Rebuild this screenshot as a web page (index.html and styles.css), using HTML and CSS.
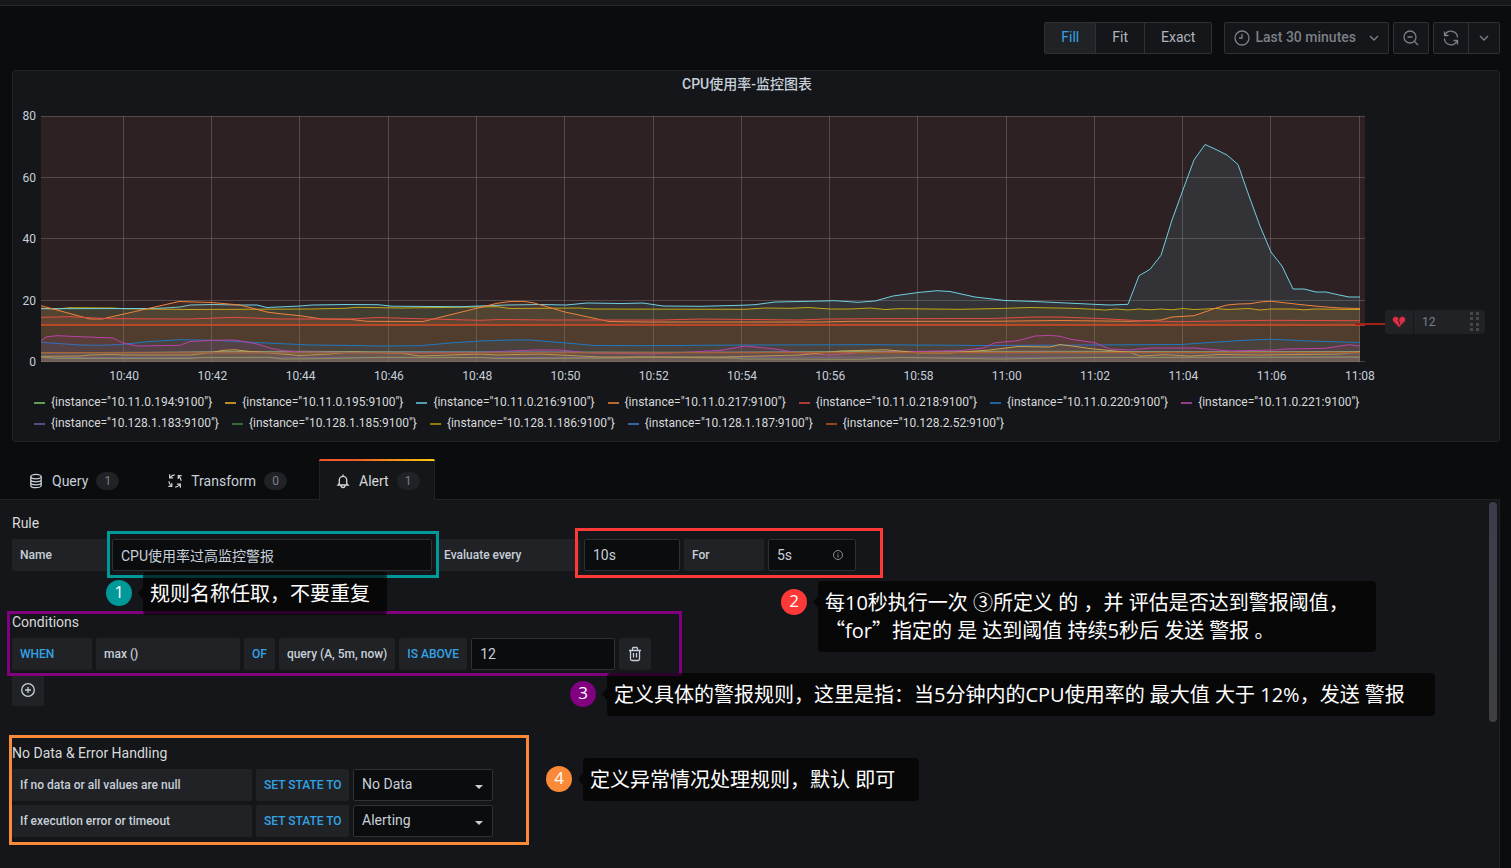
FILE: index.html
```html
<!DOCTYPE html>
<html lang="zh-CN">
<head>
<meta charset="utf-8">
<title>CPU使用率-监控图表</title>
<link rel="stylesheet" href="styles.css">
</head>
<body>
<div class="topstrip"></div>
<header class="toolbar">
  <div class="btn-group sizes">
    <button class="btn active">Fill</button><button class="btn">Fit</button><button class="btn">Exact</button>
  </div>
  <div class="btn-group">
    <button class="btn time">
      <svg class="icon" viewBox="0 0 16 16"><circle cx="8" cy="8" r="7"/><path d="M8 4v4H5"/></svg>
      <span>Last 30 minutes</span>
      <svg class="chev" viewBox="0 0 10 6"><path d="M1 1l4 4 4-4"/></svg>
    </button>
  </div>
  <div class="btn-group">
    <button class="btn square" aria-label="Zoom out"><svg class="icon" viewBox="0 0 16 16"><circle cx="7" cy="7" r="6"/><path d="M4.500 7h5M11.500 11.500l3.500 3.500"/></svg></button>
  </div>
  <div class="btn-group">
    <button class="btn square" aria-label="Refresh"><svg class="icon" viewBox="0 0 16 16"><path d="M1.500 1.500v4h4M2 5.200A6.500 6.500 0 0 1 14.500 7.500M14.500 14.500v-4h-4M14 10.800A6.500 6.500 0 0 1 1.500 8.500"/></svg></button><button class="btn narrow" aria-label="Refresh interval"><svg class="chev" viewBox="0 0 10 6"><path d="M1 1l4 4 4-4"/></svg></button>
  </div>
</header>

<section class="panel">
  <h2 class="panel-title">CPU使用率-监控图表</h2>
  <div class="chart">
    <div class="y-axis"><span>80</span><span>60</span><span>40</span><span>20</span><span>0</span></div>
    <div class="plot">
      <svg id="plot" viewBox="41 116 1324 246" preserveAspectRatio="none"></svg>
      <div class="x-axis"><span>10:40</span><span>10:42</span><span>10:44</span><span>10:46</span><span>10:48</span><span>10:50</span><span>10:52</span><span>10:54</span><span>10:56</span><span>10:58</span><span>11:00</span><span>11:02</span><span>11:04</span><span>11:06</span><span>11:08</span></div>
    </div>
    <div class="threshold">
      <i class="threshold-line"></i>
      <div class="handle">
        <span class="heart"><svg viewBox="0 0 14 14"><path class="halo" d="M7 13.400L0.900 7.300A3.600 3.600 0 0 1 0.900 2.200A3.600 3.600 0 0 1 6 1.800L7 2.800L8 1.800A3.600 3.600 0 0 1 13.100 2.200A3.600 3.600 0 0 1 13.100 7.300Z"/><path class="fill" d="M7 12L1.800 6.800A2.700 2.700 0 0 1 5.700 2.700L7 4L8.300 2.700A2.700 2.700 0 0 1 12.200 6.800Z"/><path class="crack" d="M7.300 3.500L6 6l2 1-1 2.500"/></svg></span>
        <span class="value">12</span>
        <svg class="grip" viewBox="0 0 9 20"><path d="M0 0h3v3H0zM6 0h3v3H6zM0 5h3v3H0zM6 5h3v3H6zM0 11h3v3H0zM6 11h3v3H6zM0 16h3v3H0zM6 16h3v3H6z"/></svg>
      </div>
    </div>
  </div>
  <ul class="legend">
    <li><i class="key c194"></i>{instance="10.11.0.194:9100"}</li>
    <li><i class="key c195"></i>{instance="10.11.0.195:9100"}</li>
    <li><i class="key c216"></i>{instance="10.11.0.216:9100"}</li>
    <li><i class="key c217"></i>{instance="10.11.0.217:9100"}</li>
    <li><i class="key c218"></i>{instance="10.11.0.218:9100"}</li>
    <li><i class="key c220"></i>{instance="10.11.0.220:9100"}</li>
    <li><i class="key c221"></i>{instance="10.11.0.221:9100"}</li>
    <li><i class="key c183"></i>{instance="10.128.1.183:9100"}</li>
    <li><i class="key c185"></i>{instance="10.128.1.185:9100"}</li>
    <li><i class="key c186"></i>{instance="10.128.1.186:9100"}</li>
    <li><i class="key c187"></i>{instance="10.128.1.187:9100"}</li>
    <li><i class="key c52"></i>{instance="10.128.2.52:9100"}</li>
  </ul>
</section>

<nav class="tabs">
  <button class="tab"><svg class="icon" viewBox="0 0 16 16"><ellipse cx="8" cy="3.600" rx="5.200" ry="2.200"/><path d="M2.800 3.600v8.800c0 1.200 2.300 2.200 5.200 2.200s5.200-1 5.200-2.200V3.600M2.800 6.600c0 1.200 2.300 2.200 5.200 2.200s5.200-1 5.200-2.200M2.800 9.600c0 1.200 2.300 2.200 5.200 2.200s5.200-1 5.200-2.200"/></svg>Query<span class="count">1</span></button>
  <button class="tab"><svg class="icon process" viewBox="0 0 16 16"><g id="arm"><path d="M2.600 1.300v3.500h3.500M3 4.500C4.200 3 5.800 2 7.800 1.900"/></g><use href="#arm" transform="rotate(90 8 8)"/><use href="#arm" transform="rotate(180 8 8)"/><use href="#arm" transform="rotate(270 8 8)"/></svg>Transform<span class="count">0</span></button>
  <button class="tab current"><svg class="icon" viewBox="0 0 16 16"><path d="M8 1.500v1.500M4.300 10.500V7a3.700 3.700 0 0 1 7.400 0v3.500l1.300 1.500H3zM6 12.500a2 2 0 0 0 4 0"/></svg>Alert<span class="count">1</span></button>
</nav>

<main class="editor">
  <section class="group">
    <h3>Rule</h3>
    <div class="row">
      <label class="tag w-96" for="name">Name</label>
      <input class="field w-320" id="name" type="text" value="CPU使用率过高监控警报">
      <label class="tag w-144" for="every">Evaluate every</label>
      <input class="field w-96" id="every" type="text" value="10s">
      <label class="tag w-80" for="for">For</label>
      <span class="wrap">
        <input class="field w-88" id="for" type="text" value="5s">
        <svg class="info" viewBox="0 0 12 12"><circle cx="6" cy="6" r="4.500"/><path d="M6 5.500v3M6 3.500v1"/></svg>
      </span>
    </div>
  </section>

  <section class="group conditions">
    <h3>Conditions</h3>
    <div class="row">
      <span class="tag key-word w-80">WHEN</span>
      <button class="tag w-144">max ()</button>
      <span class="tag key-word">OF</span>
      <button class="tag">query (A, 5m, now)</button>
      <button class="tag key-word">IS ABOVE</button>
      <input class="field w-144" type="text" value="12" aria-label="Threshold">
      <button class="tag w-32" aria-label="Delete"><svg class="icon" viewBox="0 0 16 16"><path d="M2 4.500h12M5.500 4.200V2.500a1 1 0 0 1 1-1h3a1 1 0 0 1 1 1v1.700M3.500 4.500V13a1.500 1.500 0 0 0 1.500 1.500h6a1.500 1.500 0 0 0 1.500-1.500V4.500M6.500 7v4.500M9.500 7v4.500"/></svg></button>
    </div>
    <div class="row">
      <button class="tag w-32" aria-label="Add condition"><svg class="icon" viewBox="0 0 16 16"><circle cx="8" cy="8" r="6.300"/><path d="M8 5v6M5 8h6"/></svg></button>
    </div>
  </section>

  <section class="group errors">
    <h3>No Data &amp; Error Handling</h3>
    <div class="row">
      <label class="tag w-240" for="nodata">If no data or all values are null</label>
      <span class="tag key-word w-93">SET STATE TO</span>
      <span class="wrap"><select class="field w-140" id="nodata"><option>No Data</option></select><i class="caret"></i></span>
    </div>
    <div class="row">
      <label class="tag w-240" for="execerr">If execution error or timeout</label>
      <span class="tag key-word w-93">SET STATE TO</span>
      <span class="wrap"><select class="field w-140" id="execerr"><option>Alerting</option></select><i class="caret"></i></span>
    </div>
  </section>

  <i class="scrollbar"></i>

  <i class="frame frame-1"></i>
  <i class="frame frame-2"></i>
  <i class="frame frame-3"></i>
  <i class="frame frame-4"></i>
  <div class="note note-1"><b class="badge">1</b><p>规则名称任取，不要重复</p></div>
  <div class="note note-2"><b class="badge">2</b><p>每10秒执行一次 ③所定义 的 ，并 评估是否达到警报阈值，<br><span class="cjk">“</span>for<span class="cjk">”</span>指定的 是 达到阈值 持续5秒后 发送 警报 。</p></div>
  <div class="note note-3"><b class="badge">3</b><p>定义具体的警报规则，这里是指：当5分钟内的CPU使用率的 最大值 大于 12%，发送 警报</p></div>
  <div class="note note-4"><b class="badge">4</b><p>定义异常情况处理规则，默认 即可</p></div>
</main>
<script src="chart.js"></script>
</body>
</html>
```
FILE: styles.css
```css
* { box-sizing: border-box; }
body {
  margin: 0;
  min-height: 100vh;
  display: flex;
  flex-direction: column;
  background: #0b0c0e;
  color: #c7d0d9;
  font: 14px/20px Roboto, "Noto Sans CJK SC", sans-serif;
  overflow: hidden;
}
button, input, select { font: inherit; color: inherit; margin: 0; }
h2, h3, p, ul { margin: 0; padding: 0; }
svg { display: block; fill: none; stroke: currentColor; flex: none; }
.icon { width: 16px; height: 16px; stroke-width: 1.3; }
.process { stroke-width: 1.2; }
.chev { width: 10px; height: 6px; stroke-width: 1.4; }

.topstrip { height: 6px; background: #17181c; border-bottom: 1px solid #26282c; }
.toolbar {
  display: flex;
  justify-content: flex-end;
  gap: 4px;
  padding: 16px 11px 16px 12px;
}
.btn-group { display: flex; height: 32px; border: 1px solid #2c3235; border-radius: 2px; background: #141619; }
.sizes { margin-right: 8px; }
.btn {
  display: flex;
  align-items: center;
  justify-content: center;
  padding: 0 16px;
  border: 0;
  background: none;
  color: #7b8087;
}
.btn + .btn { border-left: 1px solid #2c3235; }
.sizes .btn { color: #aeb5be; padding-bottom: 2px; }
.sizes .active { background: #202226; color: #33a2e5; }
.time { padding: 0 9px; font-weight: 500; }
.time span { margin: 0 13px 2px 5px; }
.square { width: 34px; padding: 0; }
.narrow { width: 31px; padding: 0; }

.panel {
  margin: 0 11px 0 12px;
  border: 1px solid #202226;
  border-radius: 3px;
  background: #141619;
  padding-bottom: 7px;
}
.panel-title {
  padding: 3px 18px 0 0;
  font-size: 14px;
  line-height: 20px;
  font-weight: 500;
  text-align: center;
}
.chart { display: grid; grid-template-columns: 28px 1fr 134px; padding-top: 22px; font-size: 12px; line-height: 16px; }
.y-axis {
  display: flex;
  flex-direction: column;
  justify-content: space-between;
  height: 262px;
  margin-top: -8px;
  padding-right: 5px;
  text-align: right;
}
.plot svg { width: 100%; height: 246px; stroke-width: 1; }
.grid-line { stroke: rgba(222, 222, 222, 0.22); }
.region { fill: rgba(234, 112, 112, 0.12); stroke: none; }
.limit { stroke: rgba(215, 75, 36, 0.75); stroke-width: 2; }
.area { stroke: none; fill-opacity: 0.1; }
.line { fill: none; }
.x-axis { display: grid; grid-template-columns: repeat(15, 1fr); margin: 6px -39px 0 39px; text-align: center; }
.threshold { display: flex; align-items: center; height: 24px; margin: 194px 14px 0 -10px; }
.threshold-line { width: 30px; height: 2px; margin-top: 4px; background: #a02015; }
.handle { display: flex; align-items: center; width: 100px; height: 24px; border-radius: 4px; background: #202226; color: #8e8e8e; }
.heart { display: flex; align-items: center; justify-content: center; width: 29px; height: 24px; border-right: 1px solid #141619; }
.heart svg { width: 14px; height: 14px; }
.halo { stroke: #8c1c30; stroke-width: 0.8; stroke-dasharray: 1 1; }
.heart .fill { fill: #e02f44; stroke: none; }
.crack { stroke: #202226; stroke-width: 1; }
.value { flex: 1; padding-left: 8px; color: #7b8087; }
.grip { width: 9px; height: 20px; margin-right: 6px; fill: #46474b; stroke: none; }

.legend {
  display: flex;
  flex-wrap: wrap;
  column-gap: 13px;
  margin-top: 8px;
  padding: 0 21px;
  list-style: none;
  font-size: 12px;
  line-height: 21px;
  color: #d8d9da;
}
.legend li { display: flex; align-items: center; white-space: nowrap; }
.key { width: 11px; height: 2px; margin: 1px 6px 0 0; }
.c194 { background: #629e51; }
.c195 { background: #b98d22; }
.c216 { background: #4f9fad; }
.c217 { background: #b9682c; }
.c218 { background: #ac3c33; }
.c220 { background: #1f639a; }
.c221 { background: #953a85; }
.c183 { background: #5a4c85; }
.c185 { background: #3a6b34; }
.c186 { background: #957a06; }
.c187 { background: #38669f; }
.c52 { background: #964715; }

.tabs { display: flex; gap: 16px; margin-top: 17px; padding-left: 12px; position: relative; z-index: 1; }
.tab {
  display: flex;
  align-items: center;
  gap: 8px;
  height: 41px;
  margin-bottom: -1px;
  padding: 1px 15px 0;
  border: 1px solid transparent;
  border-bottom: 0;
  background: none;
}
.tab.current { position: relative; padding-right: 14px; border-color: #202226; background: #141619; border-radius: 3px 3px 0 0; color: #d8d9da; }
.tab.current::before {
  content: "";
  position: absolute;
  left: -1px;
  right: -1px;
  top: -1px;
  height: 2px;
  border-radius: 2px 2px 0 0;
  background: linear-gradient(90deg, #f05a28 30%, #fbca0a);
}
.count {
  min-width: 23px;
  height: 18px;
  border-radius: 9px;
  background: #202226;
  color: #7b8087;
  font-size: 12px;
  line-height: 18px;
  text-align: center;
}

.editor {
  position: relative;
  flex: 1;
  margin-right: 11px;
  padding: 13px 12px 0;
  border: 1px solid #202226;
  border-width: 1px 1px 0 0;
  background: #141619;
}
.group { display: flex; flex-direction: column; gap: 4px; }
.conditions { margin-top: 41px; }
.errors { margin-top: 37px; }
h3 { font-size: 14px; line-height: 20px; font-weight: 400; color: #d8d9da; margin-bottom: 2px; }
.row { display: flex; gap: 4px; }
.tag {
  display: flex;
  align-items: center;
  height: 32px;
  padding: 0 8px;
  border: 0;
  border-radius: 2px;
  background: #202226;
  font-size: 12px;
  line-height: 16px;
  font-weight: 500;
  white-space: nowrap;
}
.key-word { color: #33a2e5; }
.field {
  height: 32px;
  padding: 0 8px;
  border: 1px solid #2c3235;
  border-radius: 2px;
  background: #0b0c0e;
  appearance: none;
}
select.field { padding-bottom: 2px; }
.w-32 { width: 32px; }
.w-80 { width: 80px; }
.w-88 { width: 88px; }
.w-93 { width: 93px; }
.w-96 { width: 96px; }
.w-140 { width: 140px; }
.w-144 { width: 144px; }
.w-240 { width: 240px; }
.w-320 { width: 320px; }
.wrap { position: relative; display: flex; }
.info { position: absolute; right: 12px; top: 10px; width: 12px; height: 12px; color: #8e8e8e; }
.caret { position: absolute; right: 10px; top: 16px; border: 4px solid transparent; border-top-color: #c7d0d9; border-bottom: 0; }
.scrollbar { position: absolute; top: 2px; right: 2px; width: 8px; height: 220px; border-radius: 4px; background: linear-gradient(#3b3d4d, #404041); }

/* annotation layer drawn over the form */
.frame { position: absolute; border: 3px solid; }
.frame-1 { left: 107px; top: 31px; width: 332px; height: 47px; color: #009999; }
.frame-2 { left: 575px; top: 28px; width: 308px; height: 50px; color: #ff3838; }
.frame-3 { left: 7px; top: 111px; width: 675px; height: 65px; color: #800080; }
.frame-4 { left: 9px; top: 235px; width: 520px; height: 110px; color: #fa8938; }
.note { position: absolute; display: flex; align-items: flex-start; gap: 11px; color: #fff; }
.note p {
  position: relative;
  padding: 8px 7px 7px;
  border-radius: 4px;
  background: rgba(0, 0, 0, 0.65);
  font: 20px/28px "Open Sans", "Noto Sans CJK SC", sans-serif;
  white-space: nowrap;
}
.note .cjk { font-family: "Noto Sans CJK SC", sans-serif; line-height: 1; }
.note p::before {
  content: "";
  position: absolute;
  left: -5px;
  top: 15px;
  border: 6px solid transparent;
  border-left: 0;
  border-right: 5px solid rgba(0, 0, 0, 0.65);
}
.badge {
  width: 26px;
  height: 26px;
  margin-top: 8px;
  border-radius: 50%;
  background: #009999;
  font: 17px/24px "Open Sans", sans-serif;
  text-align: center;
}
.note-1 { left: 106px; top: 72px; }
.note-1 p { width: 244px; }
.note-2 { left: 781px; top: 81px; }
.note-2 p { width: 558px; }
.note-2 .badge { background: #ff3838; }
.note-3 { left: 570px; top: 173px; }
.note-3 p { width: 828px; }
.note-3 .badge { background: #800080; }
.note-4 { left: 546px; top: 258px; }
.note-4 p { width: 336px; }
.note-4 .badge { background: #fa8938; }
```
FILE: chart.js
```js
const svg = document.getElementById("plot");
const NS = "http://www.w3.org/2000/svg";

function add(name, attrs) {
  const el = document.createElementNS(NS, name);
  for (const key in attrs) el.setAttribute(key, attrs[key]);
  svg.appendChild(el);
}

const BASE = 362;
const series = [
  { color: "#7eb26d", points: "41,352.7 150,352.3 212,351.7 300,351.3 380,351.7 500,352 700,352.3 850,351.5 1060,351.3 1200,351.7 1360,351.5" },
  { color: "#cca300", points: "41,308.3 57,309 70,307.7 113,308 125,308.8 190,309.5 310,309 345,308.3 357,307.3 400,308 440,307.5 497,306.7 510,308.5 580,308 592,309 745,309.3 765,308 790,308.3 808,307.5 830,309 850,309 870,308 885,309.5 900,308.7 960,309.3 1000,308.5 1030,307.5 1072,308.3 1094,309.3 1105,310 1116,309 1128,310 1139,309 1150,309.8 1161,309 1172,309.8 1183,308.5 1194,309.5 1216,308.5 1227,309.5 1249,308.5 1260,310 1271,309 1293,309 1304,309.8 1315,309 1360,309.5" },
  { color: "#6ed0e0", points: "41,308.7 150,308.5 165,308 180,307 190,305 212,304.5 240,305 257,305 267,307.5 300,306 312,305 345,304.5 378,304.7 392,306.2 430,306.5 460,306.7 507,305 540,304.5 566,305 587,303 622,303.5 643,303 663,306 700,306.3 740,305.3 755,304.7 775,302 810,301.3 835,300.7 858,302.3 875,301 893,296 918,292.5 937,290.7 950,291.5 975,297 1005,300.5 1030,301.3 1060,302.7 1094,304.3 1110,305 1128,304.3 1139,275.7 1150,269.3 1161,255.3 1172,220 1184,187 1194,160 1205,144.5 1216,149.5 1227,155 1238,164.5 1249,196 1260,226 1271,252 1282,266 1293,289 1304,289 1316,292 1326,292 1337,294.5 1349,297 1360,297" },
  { color: "#ef843c", points: "41,305.7 90,319 102,319 179,301.5 212,302.5 240,305 267,312 280,313.7 300,315.7 322,319 350,319.3 367,321.3 423,321.5 480,307.5 497,303.3 510,301.5 523,301.3 533,302.7 565,312 609,321.5 650,322 820,322 850,321.3 990,321.3 1060,320.5 1130,321.3 1161,320 1172,317 1194,315.7 1216,308 1227,305 1238,304 1250,303.7 1260,302 1271,301.2 1300,304.5 1320,306.5 1340,308 1360,308.5" },
  { color: "#e24d42", points: "41,317.3 70,316.7 110,318.7 190,319 235,317.3 280,319 350,319 378,317.5 430,319 480,320.3 500,319.5 550,320 660,320 700,319 800,320 825,319 880,318.7 990,318.5 1035,317 1060,317 1100,318.5 1140,320.7 1180,321.7 1240,320.7 1270,320.3 1360,320.7" },
  { color: "#1f78c1", points: "41,342.3 80,345 100,345.3 120,344.5 150,341.5 180,339.7 212,340.3 267,343 310,345 345,345.3 380,346 420,345.7 450,343 480,341 510,340 530,340 560,342.5 595,345.5 640,345.7 745,345 870,344.7 990,345.5 1180,344.5 1240,340.5 1270,339.2 1310,341 1360,342.5" },
  { color: "#ba43a9", points: "41,341 46,337 57,335.7 80,336.7 113,338 123,343 137,346 180,345.3 190,341.5 212,340.3 235,340 257,344 270,348 282,350.5 300,352 400,353 477,352.5 535,350 560,350 590,353 650,354 720,350.5 745,346 775,349 800,353 830,355 860,352.5 960,350.7 983,348 995,342.7 1018,340.7 1035,336 1050,335.3 1060,336.3 1072,339.5 1094,342.5 1110,349 1130,350 1150,348 1195,348 1230,351 1275,350 1285,349 1325,348.3 1349,344.7 1360,346" },
  { color: "#705da0", points: "41,357.5 400,357.7 800,357.3 1360,357.3" },
  { color: "#8f9a66", points: "41,357 57,358.4 190,358.4 200,357.5 270,357.3 282,359 320,358.7 380,357.3 480,357.5 500,358.5 620,358 640,357 730,358 745,359 860,359.3 900,357.5 1000,359 1090,357.5 1360,357" },
  { color: "#c9a24a", points: "41,356.3 80,356 90,355 113,354.5 125,355 190,355 212,352.5 223,350.3 235,349.8 250,351.5 270,353 300,355.5 330,354 350,352 400,353 420,356 480,354 497,355 540,354 570,355.5 600,357 720,357 800,355 840,351 885,349.8 900,351 920,353 950,353 990,350 1018,346.5 1050,347 1060,344.5 1072,346 1094,349 1130,352.5 1140,356 1165,354.7 1190,356 1220,354.5 1260,355 1340,354 1360,352" },
  { color: "#447ebc", points: "41,353 300,352.7 440,352 650,352.5 800,352.3 1000,352.7 1360,353" },
  { color: "#c15c17", points: "41,352.7 400,353 800,352.7 1360,352.7" }
];

for (let i = 0; i <= 4; i++) {
  const y = 116.5 + Math.floor(i * 61.4);
  add("line", { class: "grid-line", x1: 41, x2: 1365, y1: y, y2: y });
}
for (let i = 0; i < 15; i++) {
  const x = Math.floor(123.4 + i * 88.27) + 0.5;
  add("line", { class: "grid-line", x1: x, x2: x, y1: 116, y2: BASE });
}
add("rect", { class: "region", x: 41, y: 116, width: 1324, height: 209 });
for (const s of series) {
  add("polygon", { class: "area", fill: s.color, points: `41,${BASE} ${s.points} 1360,${BASE}` });
  add("polyline", { class: "line", stroke: s.color, points: s.points });
}
add("line", { class: "limit", x1: 41, x2: 1365, y1: 325, y2: 325 });
```
